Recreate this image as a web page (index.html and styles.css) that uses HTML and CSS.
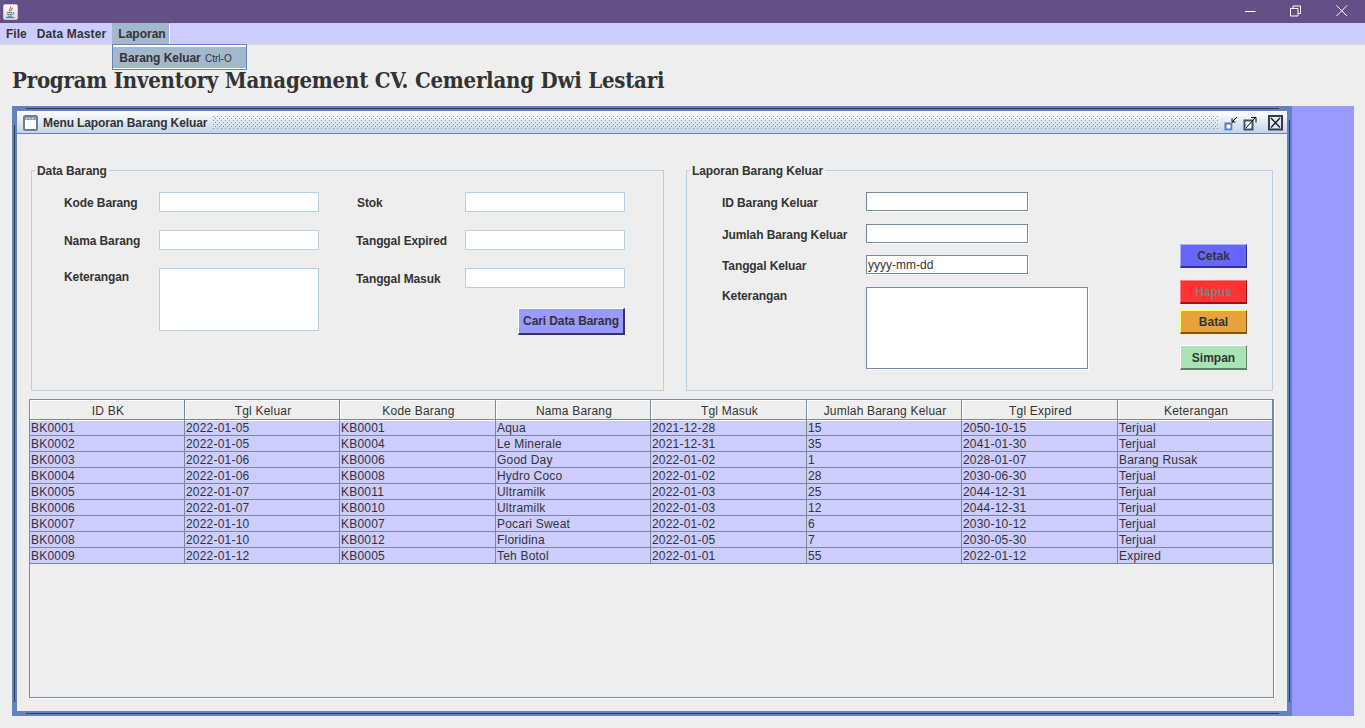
FILE: index.html
```html
<!DOCTYPE html>
<html lang="id">
<head>
<meta charset="utf-8">
<title>Program Inventory Management</title>
<link rel="stylesheet" href="styles.css">
</head>
<body>
<header class="titlebar">
  <span class="app-icon">
    <svg width="13" height="14" viewBox="0 0 14 14"><path d="M7 1c1 2-2 3-1 5M9 2.500c0 2-2 2-1.500 3.500" fill="none" stroke="#d9622b" stroke-width="1.200"/><path d="M3 7.500h6M3 9.500h6M4 11.500h5M2 13h9" stroke="#4a6f9c" stroke-width="1"/><path d="M9.500 7.500c2-.5 2 2-.5 2" fill="none" stroke="#4a6f9c"/></svg>
  </span>
  <span class="win-controls">
    <svg class="win-btn" width="12" height="12" viewBox="0 0 12 12"><path d="M1 6.500h10.500" stroke="#fff"/></svg>
    <svg class="win-btn" width="12" height="12" viewBox="0 0 12 12"><path d="M.5 3.500h7.500v7.500h-7.500zM3 3.500v-2.500h7.500v7.500h-2.500" fill="none" stroke="#fff"/></svg>
    <svg class="win-btn" width="12" height="12" viewBox="0 0 12 12"><path d="M.5.500l10.500 10.500M11 .500l-10.500 10.500" stroke="#fff"/></svg>
  </span>
</header>
<nav class="menubar">
  <span class="menu menu-file">File</span>
  <span class="menu menu-master">Data Master</span>
  <span class="menu menu-open">Laporan
    <span class="dropdown"><span class="dropitem">Barang Keluar <small>Ctrl-O</small></span></span>
  </span>
</nav>
<h1 class="heading">Program Inventory Management CV. Cemerlang Dwi Lestari</h1>
<main class="desktop">
  <section class="frame">
    <div class="frame-title">
      <svg class="frame-icon" width="15" height="16" viewBox="0 0 15 16"><rect x="1" y="1" width="13" height="14" rx="1.500" fill="#fff" stroke="#6d7f95" stroke-width="2"/><rect x="2" y="2" width="11" height="3" fill="#8fa2b8"/><path d="M3 3.500h9" stroke="#fff" stroke-dasharray="1 2"/></svg>
      <span class="frame-name">Menu Laporan Barang Keluar</span>
      <span class="dots"></span>
      <span class="frame-btns">
        <svg width="15" height="16" viewBox="0 0 15 16"><rect x="1" y="8" width="8" height="8" fill="#fff"/><rect x="1.500" y="8.500" width="6" height="6" fill="#fff" stroke="#5a7ab8" stroke-width="2"/><path d="M13 2l-5 5M8 3.500v3.500h3.500" fill="none" stroke="#000"/></svg>
        <svg width="15" height="16" viewBox="0 0 15 16"><rect x="1.500" y="5.500" width="8" height="9" fill="#fff" stroke="#3d5070" stroke-width="2"/><path d="M3 13l9-10M8 2.500h5v5" fill="none" stroke="#000"/></svg>
        <svg class="close-btn" width="15" height="16" viewBox="0 0 15 16"><rect x="1" y="1" width="13" height="13.500" fill="#dfe8f3" stroke="#333b48" stroke-width="2"/><path d="M3 3l9 9.500M12 3l-9 9.500" stroke="#111" stroke-width="1.200"/></svg>
      </span>
    </div>
    <div class="frame-body">
      <div class="forms">
        <fieldset class="group group-barang">
          <legend>Data Barang</legend>
          <div class="barang-grid">
            <label class="lbl">Kode Barang</label><span class="inp"></span>
            <label class="lbl lbl-r lbl-stok">Stok</label><span class="inp inp-r"></span>
            <label class="lbl">Nama Barang</label><span class="inp"></span>
            <label class="lbl lbl-r">Tanggal Expired</label><span class="inp inp-r"></span>
            <label class="lbl lbl-top">Keterangan</label><span class="inp area-small"></span>
            <label class="lbl lbl-r lbl-masuk">Tanggal Masuk</label><span class="inp inp-r inp-masuk"></span>
            <button class="btn btn-cari" type="button">Cari Data Barang</button>
          </div>
        </fieldset>
        <fieldset class="group group-laporan">
          <legend>Laporan Barang Keluar</legend>
          <div class="laporan-wrap">
            <div class="laporan-grid">
              <label class="lbl">ID Barang Keluar</label><span class="inp inp-dark"></span>
              <label class="lbl">Jumlah Barang Keluar</label><span class="inp inp-dark"></span>
              <label class="lbl">Tanggal Keluar</label><span class="inp inp-dark inp-text">yyyy-mm-dd</span>
              <label class="lbl lbl-top">Keterangan</label><span class="inp inp-dark area-large"></span>
            </div>
            <div class="actions">
              <button class="btn btn-cetak" type="button">Cetak</button>
              <button class="btn btn-hapus" type="button">Hapus</button>
              <button class="btn btn-batal" type="button">Batal</button>
              <button class="btn btn-simpan" type="button">Simpan</button>
            </div>
          </div>
        </fieldset>
      </div>
      <div class="table-pane">
        <table class="data">
          <thead>
            <tr><th>ID BK</th><th>Tgl Keluar</th><th>Kode Barang</th><th>Nama Barang</th><th>Tgl Masuk</th><th>Jumlah Barang Keluar</th><th>Tgl Expired</th><th>Keterangan</th></tr>
          </thead>
          <tbody>
            <tr><td>BK0001</td><td>2022-01-05</td><td>KB0001</td><td>Aqua</td><td>2021-12-28</td><td>15</td><td>2050-10-15</td><td>Terjual</td></tr>
            <tr><td>BK0002</td><td>2022-01-05</td><td>KB0004</td><td>Le Minerale</td><td>2021-12-31</td><td>35</td><td>2041-01-30</td><td>Terjual</td></tr>
            <tr><td>BK0003</td><td>2022-01-06</td><td>KB0006</td><td>Good Day</td><td>2022-01-02</td><td>1</td><td>2028-01-07</td><td>Barang Rusak</td></tr>
            <tr><td>BK0004</td><td>2022-01-06</td><td>KB0008</td><td>Hydro Coco</td><td>2022-01-02</td><td>28</td><td>2030-06-30</td><td>Terjual</td></tr>
            <tr><td>BK0005</td><td>2022-01-07</td><td>KB0011</td><td>Ultramilk</td><td>2022-01-03</td><td>25</td><td>2044-12-31</td><td>Terjual</td></tr>
            <tr><td>BK0006</td><td>2022-01-07</td><td>KB0010</td><td>Ultramilk</td><td>2022-01-03</td><td>12</td><td>2044-12-31</td><td>Terjual</td></tr>
            <tr><td>BK0007</td><td>2022-01-10</td><td>KB0007</td><td>Pocari Sweat</td><td>2022-01-02</td><td>6</td><td>2030-10-12</td><td>Terjual</td></tr>
            <tr><td>BK0008</td><td>2022-01-10</td><td>KB0012</td><td>Floridina</td><td>2022-01-05</td><td>7</td><td>2030-05-30</td><td>Terjual</td></tr>
            <tr><td>BK0009</td><td>2022-01-12</td><td>KB0005</td><td>Teh Botol</td><td>2022-01-01</td><td>55</td><td>2022-01-12</td><td>Expired</td></tr>
          </tbody>
        </table>
      </div>
    </div>
  </section>
</main>
</body>
</html>
```
FILE: styles.css
```css
* { box-sizing: border-box; }
html, body { margin: 0; height: 100%; overflow: hidden; }
body { background: #eeeeee; color: #333333; font: 12px "Liberation Sans", Arial, sans-serif; }

.titlebar { height: 23px; background: #654f87; display: flex; align-items: center; justify-content: space-between; padding-left: 3px; }
.app-icon { width: 15px; height: 16px; background: linear-gradient(#fff, #d8d8d8); border: 1px solid #c8c8c8; border-radius: 2px; display: flex; align-items: center; justify-content: center; }
.win-controls { display: flex; height: 100%; align-items: center; padding-bottom: 2px; }
.win-btn { width: 46px; padding: 0 17px; height: 12px; overflow: visible; }

.menubar { height: 22px; background: #ccccff; border-bottom: 2px solid #d4d4d4; display: flex; font-weight: bold; position: relative; }
.menu { padding: 4px 6px 0; height: 21px; line-height: 14px; }
.menu-file { padding-right: 4px; }
.menu-master { letter-spacing: 0.15px; padding-right: 5px; }
.menu-open { background: #a3b8cc; border: 1px solid #a3b8cc; border-right-color: #eeeeee; border-bottom: 0; position: relative; padding: 3px 5px 0; margin-left: 1px; height: 21px; width: 58px; }
.dropdown { position: absolute; left: -1px; top: 20px; width: 135px; height: 26px; background: #a3b8cc; border: 1px solid #6382bf; box-shadow: inset 0 2px 0 #fff, inset 0 -1px 0 #fff; padding: 6px 0 0 6px; white-space: nowrap; z-index: 5; letter-spacing: -0.05px; }
.dropitem small { font-size: 10px; font-weight: normal; margin-left: 1px; letter-spacing: 0; }

.heading { margin: 0; padding: 17px 0 0 12px; height: 61px; font: bold 22px/36px "DejaVu Serif Condensed", "DejaVu Serif", serif; font-stretch: condensed; letter-spacing: -0.22px; color: #333333; white-space: nowrap; }

.desktop { margin-left: 12px; width: 1342px; height: 610px; background: #9999ff; }
.frame { width: 1280px; height: 610px; background: #6382bf; padding: 5px; position: relative; display: flex; flex-direction: column; }
.frame::before { content: ""; position: absolute; left: 14px; right: 13px; top: 2px; height: 1px; background: #333b48; }
.frame::after { content: ""; position: absolute; left: 14px; right: 13px; bottom: 2px; height: 1px; background: #333b48; }

.frame-title { height: 23px; flex: none; background: linear-gradient(#ffffff, #c4d4e6); border-bottom: 1px solid #6382bf; display: flex; align-items: center; padding: 1px 0 0 6px; position: relative; font-weight: bold; }
.frame-icon { flex: none; }
.frame-name { margin-left: 5px; white-space: nowrap; letter-spacing: -0.12px; }
.dots { flex: 1; height: 14px; margin-left: 6px; background-image: conic-gradient(at 1px 1px, transparent 75%, #7f8fa6 0), conic-gradient(at 1px 1px, transparent 75%, #7f8fa6 0); background-size: 4px 4px; background-position: 0 0, 2px 2px; }
.frame-btns { display: flex; align-items: center; margin-left: 5px; padding-right: 4px; gap: 4px; }
.close-btn { margin-left: 6px; }

.frame-body { flex: 1; background: #eeeeee; padding: 29px 13px 13px 12px; display: flex; flex-direction: column; position: relative; }
.frame-body::before, .frame-body::after { content: ""; position: absolute; bottom: 9px; width: 1px; background: #333b48; }
.frame-body::before { left: -3px; top: -9px; }
.frame-body::after { right: -3px; top: -14px; }

.forms { display: flex; height: 228px; margin-left: 2px; flex: none; }
.group { margin: 0; padding: 0; border: 1px solid #b8cfe5; min-width: 0; height: 228px; }
.group legend { font-weight: bold; padding: 1px 2px 0; margin-left: 3px; line-height: 14px; letter-spacing: -0.08px; }
.group-barang { width: 633px; }
.group-laporan { width: 587px; margin-left: 22px; }

.lbl { font-weight: bold; white-space: nowrap; line-height: 20px; padding-top: 1px; display: block; letter-spacing: -0.1px; }
.lbl-top { line-height: 16px; }
.inp { display: block; background: #fff; border: 1px solid #b8cfe5; line-height: 18px; padding-left: 1px; }
.inp-dark { border-color: #7a8a99; box-shadow: 1px 1px 0 #ffffff; }

.barang-grid { display: grid; grid-template-columns: 95px 160px 37px 109px 160px; grid-template-rows: repeat(4, 20px); row-gap: 18px; padding: 14px 0 0 32px; }
.barang-grid > .lbl { grid-column: 1; }
.barang-grid > .inp { grid-column: 2; }
.barang-grid > .lbl-r { grid-column: 4; }
.barang-grid > .inp-r { grid-column: 5; }
.barang-grid > .lbl-stok { padding-left: 1px; }
.barang-grid > .lbl-top, .barang-grid > .lbl-masuk, .barang-grid > .inp-masuk { grid-row: 3; }
.barang-grid > .area-small { grid-row: 3 / span 2; height: 63px; }
.btn-cari { grid-column: 4 / span 2; grid-row: 4; justify-self: end; align-self: start; margin-top: 2px; width: 107px; height: 27px; letter-spacing: -0.1px; }

.laporan-wrap { display: flex; padding: 14px 0 0 35px; }
.laporan-grid { display: grid; grid-template-columns: 144px 222px; grid-template-rows: 32px 31px 32px 82px; width: 366px; }
.laporan-grid .inp { width: 162px; height: 19px; line-height: 18px; }
.laporan-grid .inp.area-large { width: 222px; height: 82px; }
.actions { display: flex; flex-direction: column; margin: 52px 0 0 92px; }

.btn { font: bold 12px "Liberation Sans", Arial, sans-serif; color: #333333; padding: 1px 0 0; border: 2px solid; display: block; }
.btn-cari { padding: 0; background: #9999ff; border-color: #ffffff #333366 #333366 #ffffff; border-width: 1px 2px 2px 1px; }
.btn-cetak, .btn-hapus, .btn-batal, .btn-simpan { width: 67px; border-width: 1px 1px 2px 1px; }
.btn-cetak { height: 24px; background: #6666ff; border-color: #b0b0ff #333388 #333388 #b0b0ff; }
.btn-hapus { height: 24px; margin-top: 12px; background: #ff3333; color: #808080; border-color: #ff8080 #8c1a1a #8c1a1a #ff8080; }
.btn-batal { height: 24px; margin-top: 6px; background: #e8a33a; border-color: #ffff66 #80551a #80551a #ffff66; }
.btn-simpan { height: 25px; margin-top: 11px; background: #a8e4b4; border-color: #ffffff #5f8068 #5f8068 #ffffff; }

.table-pane { flex: none; height: 299px; margin-top: 8px; border: 1px solid #7a8a99; box-shadow: 1px 1px 0 #ffffff; overflow: hidden; }
.data { border-collapse: separate; border-spacing: 0; table-layout: fixed; width: 1243px; font-size: 12px; letter-spacing: 0.2px; }
.data th { width: 155px; height: 20px; padding: 2px 0 0 2px; font-weight: normal; text-align: center; border-right: 1px solid #7a8a99; border-bottom: 1px solid #7a8a99; box-shadow: inset 1px 1px 0 #ffffff; background: #eeeeee; }
.data th:nth-child(3), .data th:nth-child(5), .data th:nth-child(7) { width: 156px; }
.data td { height: 16px; padding: 1px 0 0 1px; line-height: 14px; background: #ccccff; border-right: 1px solid #7a8a99; border-bottom: 1px solid #7a8a99; white-space: nowrap; overflow: hidden; }
.data tbody tr:first-child td { box-shadow: inset 0 1px 0 #ffffff; }
```
